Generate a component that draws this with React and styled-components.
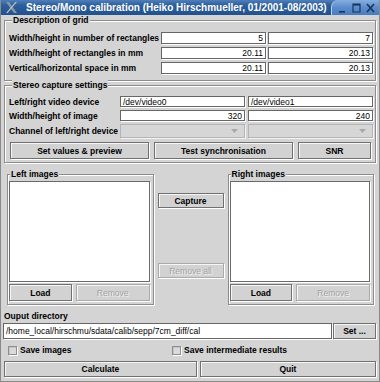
import React from 'react';
import styled, { createGlobalStyle } from 'styled-components';

const BG = '#d4d4d4';

const GlobalStyle = createGlobalStyle`
  html, body {
    margin: 0;
    padding: 0;
    background: ${BG};
  }
  body {
    font-family: "Liberation Sans", Arial, sans-serif;
  }
  * {
    box-sizing: border-box;
  }
`;

const Window = styled.div`
  width: 380px;
  height: 382px;
  display: flex;
  flex-direction: column;
  background: ${BG};
  border: 1px solid #8a8a8a;
  border-top: none;
  font-size: 8.5px;
  color: #000;
  overflow: hidden;
`;

const TitleBar = styled.div`
  height: 15px;
  flex: none;
  display: flex;
  align-items: center;
  background: linear-gradient(#4f80bb, #2c5e9b 35%, #22528e);
  color: #fff;
`;

const TitleIcon = styled.svg`
  width: 11px;
  height: 11px;
  margin: 0 9px 0 5px;
  flex: none;
`;

const TitleText = styled.div`
  flex: 1;
  font-size: 10px;
  font-weight: bold;
  white-space: nowrap;
`;

const TitleButtons = styled.div`
  height: 100%;
  display: flex;
  align-items: center;
  gap: 3px;
  padding: 0 3px 0 5px;
  background: linear-gradient(#86afe0, #5b8ccb 50%, #4a7cbd);
  border-left: 1px solid #b6d0f0;
  border-top-left-radius: 7px;
`;

const TitleBtn = styled.svg`
  width: 11px;
  height: 10px;
`;

const Body = styled.div`
  flex: 1;
  display: flex;
  flex-direction: column;
  padding: 0 3px 3px 2px;
`;

const Group = styled.fieldset`
  margin: ${p => p.$margin || '0 0 0 1px'};
  padding: ${p => p.$pad};
  border: 1px solid #8c8c8c;
  box-shadow: inset 1px 1px 0 #fff, 1px 1px 0 #fff;
  min-width: 0;
`;

const Legend = styled.legend`
  margin-left: ${p => p.$indent ?? 3}px;
  padding: 0 1px;
  font-weight: bold;
  line-height: 10px;
  background: ${BG};
`;

const FormGrid = styled.div`
  display: grid;
  grid-template-columns: ${p => p.$label}px 1fr 1fr;
  column-gap: ${p => p.$gap}px;
  row-gap: 3px;
  align-items: center;
`;

const Label = styled.div`
  font-weight: bold;
  white-space: nowrap;
`;

const TextField = styled.div`
  height: ${p => p.$h || 12}px;
  display: flex;
  align-items: center;
  justify-content: ${p => (p.$right ? 'flex-end' : 'flex-start')};
  padding: 0 2px;
  background: #fff;
  border: 1px solid #666;
  box-shadow: 1px 1px 0 #fff;
  white-space: nowrap;
  overflow: hidden;
`;

const Combo = styled.div`
  height: 14px;
  display: flex;
  align-items: center;
  justify-content: flex-end;
  padding-right: 6px;
  background: #d6d6d6;
  border: 1px solid #b4b4b4;
  box-shadow: 1px 1px 0 #f4f4f4;
`;

const Button = styled.button`
  height: ${p => p.$h || 16}px;
  margin: 0;
  padding: 0;
  font-family: inherit;
  font-size: 8.5px;
  font-weight: ${p => (p.disabled ? 'normal' : 'bold')};
  color: ${p => (p.disabled ? '#a2a2a2' : '#000')};
  text-shadow: ${p => (p.disabled ? '1px 1px 0 #f2f2f2' : 'none')};
  background: #d2d2d2;
  border: 1px solid ${p => (p.disabled ? '#aaaaaa' : '#707070')};
  box-shadow: inset 1px 1px 0 #f6f6f6, 1px 1px 0 #fff;
  white-space: nowrap;
`;

const ButtonRow = styled.div`
  display: grid;
  grid-template-columns: ${p => p.$cols};
  column-gap: ${p => p.$gap}px;
  margin: ${p => p.$margin || '0'};
`;

const Middle = styled.div`
  display: grid;
  grid-template-columns: 1fr 66px 1fr;
  column-gap: 4px;
  padding: 0 2px 0 4px;
  margin-top: 6px;
`;

const ListArea = styled.div`
  height: 101px;
  margin-bottom: 2px;
  background: #fff;
  border: 1px solid #6a6a6a;
  box-shadow: 1px 1px 0 #fff;
`;

const CenterColumn = styled.div`
  display: flex;
  flex-direction: column;
  gap: 55px;
  padding-top: 24px;
`;

const DirLabel = styled.div`
  font-weight: bold;
  line-height: 10px;
  margin: 6px 0 2px 1px;
`;

const DirRow = styled.div`
  display: flex;
  gap: 1px;
`;

const PathField = styled(TextField)`
  flex: 1;
`;

const SetButton = styled(Button)`
  width: 43px;
`;

const CheckRow = styled.div`
  display: grid;
  grid-template-columns: 164px 1fr;
  padding-left: 5px;
  margin-top: 6px;
`;

const CheckItem = styled.label`
  display: flex;
  align-items: center;
  gap: 3px;
  font-weight: bold;
  height: 10px;
`;

const CheckBox = styled.span`
  width: 9px;
  height: 9px;
  background: #dadada;
  border: 1px solid #8e8e8e;
  box-shadow: inset 1px 1px 0 #c4c4c4, 1px 1px 0 #fff;
`;

const BottomRow = styled(ButtonRow)`
  margin-top: 6px;
  padding-left: 1px;
`;

const Arrow = () => (
  <svg width="7" height="4" viewBox="0 0 7 4">
    <path d="M0 0h7L3.5 4z" fill="#a9a9a9" />
  </svg>
);

const ImageGroup = ({ title }) => (
  <Group $margin="0" $pad="2px 3px 3px 1px">
    <Legend $indent={1}>{title}</Legend>
    <ListArea />
    <ButtonRow $cols="63fr 74fr" $gap={4}>
      <Button $h={17}>Load</Button>
      <Button $h={17} disabled>Remove</Button>
    </ButtonRow>
  </Group>
);

const App = () => (
  <>
    <GlobalStyle />
    <Window>
      <TitleBar>
        <TitleIcon viewBox="0 0 11 11">
          <path d="M0 0h3l8 11H8z" fill="#8b96a3" />
          <path d="M11 0H9.3L0 11h1.7z" fill="#b4bcc6" />
        </TitleIcon>
        <TitleText>Stereo/Mono calibration (Heiko Hirschmueller, 01/2001-08/2003)</TitleText>
        <TitleButtons>
          <TitleBtn viewBox="0 0 11 10">
            <path d="M2 8h6v1.6H2z" fill="#17365f" />
          </TitleBtn>
          <TitleBtn viewBox="0 0 11 10">
            <path d="M2 1h7v8H2z" fill="none" stroke="#17365f" strokeWidth="1.2" />
            <path d="M2 1h7v1.6H2z" fill="#17365f" />
          </TitleBtn>
          <TitleBtn viewBox="0 0 11 10">
            <path d="M2 1l7 8M9 1l-7 8" stroke="#17365f" strokeWidth="1.7" />
          </TitleBtn>
        </TitleButtons>
      </TitleBar>

      <Body>
        <Group $pad="7px 2px 6px 4px">
          <Legend>Description of grid</Legend>
          <FormGrid $label={150} $gap={2}>
            <Label>Width/height in number of rectangles</Label>
            <TextField $right>5</TextField>
            <TextField $right>7</TextField>
            <Label>Width/height of rectangles in mm</Label>
            <TextField $right>20.11</TextField>
            <TextField $right>20.13</TextField>
            <Label>Vertical/horizontal space in mm</Label>
            <TextField $right>20.11</TextField>
            <TextField $right>20.13</TextField>
          </FormGrid>
        </Group>

        <Group $margin="-1px 0 0 1px" $pad="6px 2px 3px 4px">
          <Legend>Stereo capture settings</Legend>
          <FormGrid $label={108} $gap={3}>
            <Label>Left/right video device</Label>
            <TextField $h={11}>/dev/video0</TextField>
            <TextField $h={11}>/dev/video1</TextField>
            <Label>Width/height of image</Label>
            <TextField $h={11} $right>320</TextField>
            <TextField $h={11} $right>240</TextField>
            <Label>Channel of left/right device</Label>
            <Combo><Arrow /></Combo>
            <Combo><Arrow /></Combo>
          </FormGrid>
          <ButtonRow $cols="139fr 139fr 73fr" $gap={5} $margin="4px 2px 0 1px">
            <Button $h={17}>Set values &amp; preview</Button>
            <Button $h={17}>Test synchronisation</Button>
            <Button $h={17}>SNR</Button>
          </ButtonRow>
        </Group>

        <Middle>
          <ImageGroup title="Left images" />
          <CenterColumn>
            <Button $h={15}>Capture</Button>
            <Button $h={15} disabled>Remove all</Button>
          </CenterColumn>
          <ImageGroup title="Right images" />
        </Middle>

        <DirLabel>Ouput directory</DirLabel>
        <DirRow>
          <PathField $h={16}>/home_local/hirschmu/sdata/calib/sepp/7cm_diff/cal</PathField>
          <SetButton>Set ...</SetButton>
        </DirRow>

        <CheckRow>
          <CheckItem><CheckBox />Save images</CheckItem>
          <CheckItem><CheckBox />Save intermediate results</CheckItem>
        </CheckRow>

        <BottomRow $cols="195fr 178fr" $gap={3}>
          <Button>Calculate</Button>
          <Button>Quit</Button>
        </BottomRow>
      </Body>
    </Window>
  </>
);

export default App;
